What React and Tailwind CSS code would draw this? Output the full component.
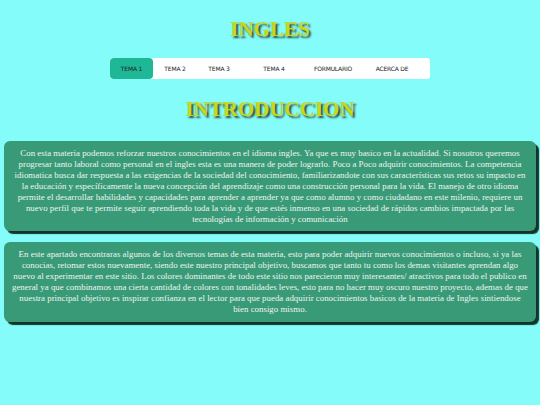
export default function App() {
  const tabs = [
    { label: "TEMA 1", w: "w-[43px]", active: true },
    { label: "TEMA 2", w: "w-[44px]" },
    { label: "TEMA 3", w: "w-[44px]" },
    { label: "TEMA 4", w: "w-[66px]" },
    { label: "FORMULARIO", w: "w-[52px]" },
    { label: "ACERCA DE", w: "w-[66px]" },
  ];
  const title =
    "font-['Liberation_Serif',serif] font-bold text-[#c9d81c] [text-shadow:2px_2px_2px_#2b4a2e] leading-none";
  const box =
    "mx-[4px] rounded-[6px] bg-[#399a78] shadow-[3px_3px_1px_#16332a] text-center text-[#eef4ef] font-['Liberation_Serif',serif] text-[8.9px] leading-[11px]";
  return (
    <div className="min-h-[405px] w-[540px] bg-[#84fcf9] pt-[19px] pb-[20px]">
      <h1 className={`${title} text-[21px] text-center`}>INGLES</h1>
      <div className="mt-[18px] flex justify-center">
        <nav className="flex h-[21px] w-[320px] rounded-[3px] bg-white">
          {tabs.map((t) => (
            <div
              key={t.label}
              className={`${t.w} flex items-center justify-center rounded-[4px] font-['DejaVu_Sans',sans-serif] text-[6px] tracking-[-0.2px] text-[#222] ${
                t.active ? "bg-[#1fb896]" : ""
              }`}
            >
              {t.label}
            </div>
          ))}
        </nav>
      </div>
      <h2 className={`${title} mt-[20px] text-[21px] text-center`}>INTRODUCCION</h2>
      <div className={`${box} mt-[21px] px-[9px] py-[6.5px]`}>
        Con esta materia podemos reforzar nuestros conocimientos en el idioma ingles. Ya que es muy basico en la actualidad. Si nosotros queremos progresar tanto laboral como personal en el ingles esta es una manera de poder lograrlo. Poco a Poco adquirir conocimientos. La competencia idiomatica busca dar respuesta a las exigencias de la sociedad del conocimiento, familiarizandote con sus características sus retos su impacto en la educación y específicamente la nueva concepción del aprendizaje como una construcción personal para la vida. El manejo de otro idioma permite el desarrollar habilidades y capacidades para aprender a aprender ya que como alumno y como ciudadano en este milenio, requiere un nuevo perfil que te permite seguir aprendiendo toda la vida y de que estés inmenso en una sociedad de rápidos cambios impactada por las tecnologías de información y comunicación
      </div>
      <div className={`${box} mt-[11px] px-[7px] py-[7px]`}>
        En este apartado encontraras algunos de los diversos temas de esta materia, esto para poder adquirir nuevos conocimientos o incluso, si ya las conocias, retomar estos nuevamente, siendo este nuestro principal objetivo, buscamos que tanto tu como los demas visitantes aprendan algo nuevo al experimentar en este sitio. Los colores dominantes de todo este sitio nos parecieron muy interesantes/ atractivos para todo el publico en general ya que combinamos una cierta cantidad de colores con tonalidades leves, esto para no hacer muy oscuro nuestro proyecto, ademas de que nuestra principal objetivo es inspirar confianza en el lector para que pueda adquirir conocimientos basicos de la materia de Ingles sintiendose bien consigo mismo.
      </div>
    </div>
  );
}
